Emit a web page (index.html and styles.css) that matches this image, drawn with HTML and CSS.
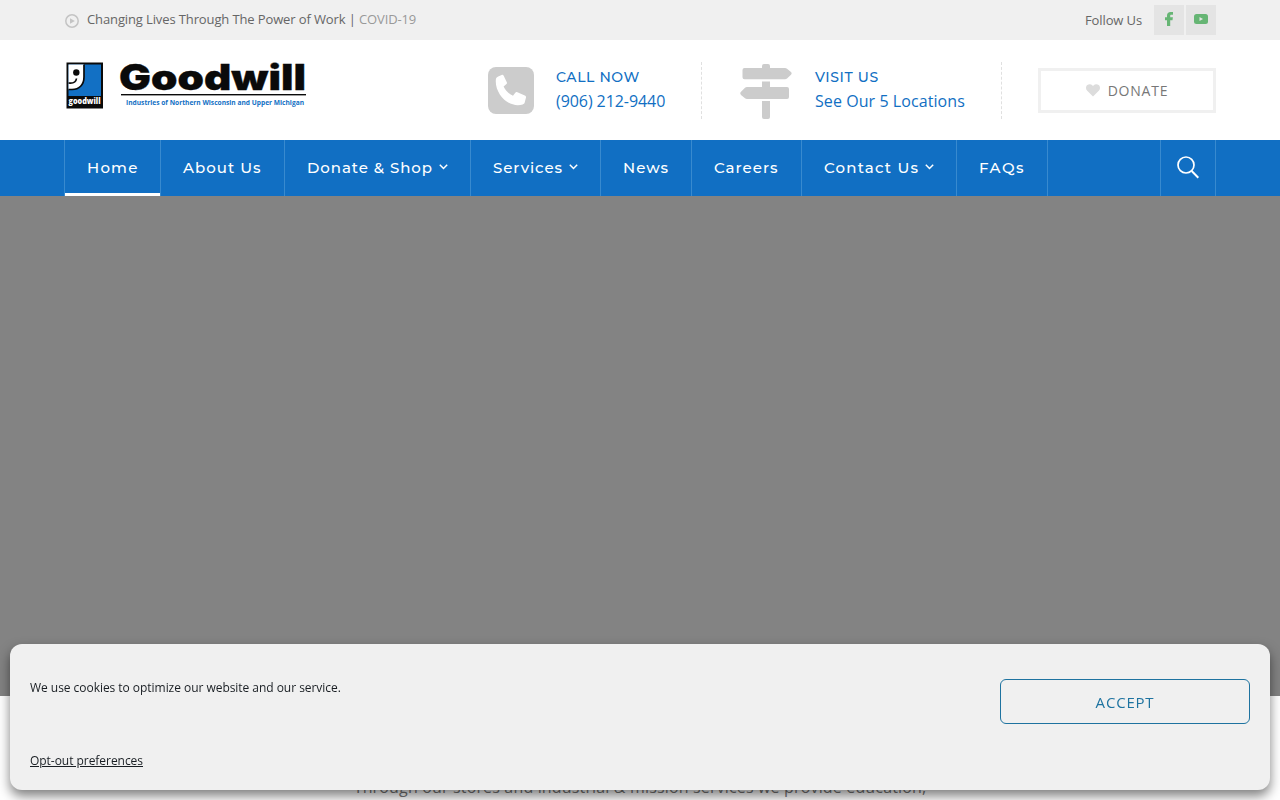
FILE: index.html
```html
<!DOCTYPE html>
<html lang="en-US">
<head>
  <meta charset="UTF-8">
  <meta name="viewport" content="width=device-width, initial-scale=1.0">
  <title>Goodwill Industries of Northern Wisconsin and Upper Michigan</title>
  <link rel="stylesheet" href="styles.css">
</head>
<body>
  <div class="top-bar">
    <div class="container top-inner">
      <div class="tagline">
        <svg width="14" height="14" viewBox="0 0 14 14"><circle cx="7" cy="7" r="6.2" fill="none" stroke="#c4c4c4" stroke-width="1.5"/><path d="M5 4.3v5.4L9.8 7z" fill="#c4c4c4"/></svg>
        <span>Changing Lives Through The Power of Work | <a href="#">COVID-19</a></span>
      </div>
      <div class="social">
        <span>Follow Us</span>
        <a href="#" aria-label="Facebook"><svg width="10" height="14" viewBox="0 0 10 14"><path d="M3 14V8.300H1V5.200h2V3.600C3 1.300 4.400 0 6.500 0H9v2.800H7.300c-.9 0-1.100.400-1.100 1.100v1.300h2.700l-.4 3.100H6.200V14z" fill="#66b574"/></svg></a>
        <a href="#" aria-label="YouTube"><svg width="14" height="10" viewBox="0 0 14 10"><rect width="14" height="10" rx="2.500" fill="#66b574"/><path d="M5.500 3v4L9 5z" fill="#e4e4e4"/></svg></a>
      </div>
    </div>
  </div>

  <header class="container header">
    <a href="#" class="logo" aria-label="Goodwill">
      <svg width="250" height="50" viewBox="0 0 250 50">
        <rect x="2.500" y="2.500" width="36.500" height="46" fill="#0a0a0a"/>
        <rect x="4.500" y="4.500" width="32.500" height="31.500" fill="#1270c4"/>
        <path d="M4.500 4.500H20V17c0 8-5 12.500-12 12.500H4.500z" fill="#fff"/>
        <path d="M20 4.500V17c0 8-5 12.500-12 12.500H4.500" fill="none" stroke="#0a0a0a" stroke-width="1.700"/>
        <circle cx="12.300" cy="12.500" r="3.200" fill="#0a0a0a"/>
        <path d="M4.500 23c4.500.500 7.500-1 8-4.500" fill="none" stroke="#0a0a0a" stroke-width="1.700"/>
        <text x="4.500" y="44" class="logo-small" textLength="32" lengthAdjust="spacingAndGlyphs">goodwill</text>
        <text x="55" y="30" class="logo-name" textLength="187" lengthAdjust="spacingAndGlyphs">Goodwill</text>
        <rect x="57" y="34" width="185" height="1.400" fill="#0a0a0a"/>
        <text x="62" y="44.500" class="logo-sub" textLength="178" lengthAdjust="spacingAndGlyphs">Industries of Northern Wisconsin and Upper Michigan</text>
      </svg>
    </a>
    <div class="header-info">
      <a href="#" class="info call">
        <svg width="46" height="47" viewBox="0 0 46 47"><rect width="46" height="47" rx="8" fill="#ccc"/><path d="M10.200 9.500 13.600 8c1-.400 1.700 0 2.200.900l3 6.300c.4.900.1 1.500-.6 2.100l-2.600 2.200c2 4.300 5 7.300 9.400 9.300l2.300-3c.6-.7 1.200-.9 2.100-.5l7.400 3.200c.9.400 1.400 1 1.200 1.900l-1.300 5.200c-.2.900-1 1.600-2 1.900C20.500 41.700 6.200 26.200 7.900 12.200c.2-1.300 1.200-2.200 2.300-2.700z" fill="#fff"/></svg>
        <span class="info-text"><b>CALL NOW</b><span class="phone">(906) 212-9440</span></span>
      </a>
      <a href="#" class="info visit">
        <svg width="52" height="55" viewBox="0 0 52 55"><path d="M22 4V2q0-2 2-2h4q2 0 2 2v2h15q1.200 0 2 .800L51 8q1.300 1.300 0 2.700l-4 3.800q-.8.700-2 .7H4.500q-2 0-2-2V6q0-2 2-2zM22 17.500h8V23h17q2 0 2 2v8q0 2-2 2H7q-1.200 0-2-.7L1 31q-1.500-1.700 0-3.300L5 23.800q.8-.8 2-.8h15zM22 37h8v16q0 2-2 2h-4q-2 0-2-2z" fill="#ccc"/></svg>
        <span class="info-text"><b>VISIT US</b><span class="locations">See Our 5 Locations</span></span>
      </a>
      <a href="#" class="donate">
        <svg width="14" height="13" viewBox="0 0 14 13"><path d="M7 12.500 1.200 6.800C-.5 5-.3 2.400 1.300 1 3-.3 5.200 0 6.500 1.400l.5.500.5-.5C8.800 0 11 -.3 12.700 1c1.600 1.400 1.800 4 .1 5.800z" fill="#dcdcdc"/></svg>
        <span>DONATE</span>
      </a>
    </div>
  </header>

  <nav class="main-nav">
    <div class="container nav-inner">
      <ul class="menu">
        <li class="active"><a href="#">Home</a></li>
        <li><a href="#">About Us</a></li>
        <li class="tight"><a href="#">Donate &amp; Shop</a><svg width="9" height="6" viewBox="0 0 9 6"><path d="M.8.800 4.500 4.500 8.200.8" class="arrow"/></svg></li>
        <li class="tight"><a href="#">Services</a><svg width="9" height="6" viewBox="0 0 9 6"><path d="M.8.800 4.500 4.500 8.200.8" class="arrow"/></svg></li>
        <li><a href="#">News</a></li>
        <li><a href="#">Careers</a></li>
        <li class="wide"><a href="#">Contact Us</a><svg width="9" height="6" viewBox="0 0 9 6"><path d="M.8.800 4.500 4.500 8.200.8" class="arrow"/></svg></li>
        <li class="wide"><a href="#">FAQs</a></li>
      </ul>
      <a href="#" class="search" aria-label="Search">
        <svg width="22" height="23" viewBox="0 0 22 23"><circle cx="9" cy="9" r="8" fill="none" stroke="#fff" stroke-width="1.700"/><path d="M14.700 15 21.300 21.700" stroke="#fff" stroke-width="2"/></svg>
      </a>
    </div>
  </nav>

  <section class="hero"></section>

  <main class="intro">
    <p>Through our stores and industrial &amp; mission services we provide education,</p>
  </main>

  <div class="cookie-banner">
    <div class="cookie-row">
      <p>We use cookies to optimize our website and our service.</p>
      <button>ACCEPT</button>
    </div>
    <a href="#" class="opt-out">Opt-out preferences</a>
  </div>
</body>
</html>
```
FILE: styles.css
```css
:root {
  --blue: #116fc3;
  --light: #f0f0f0;
}

* {
  box-sizing: border-box;
}

body {
  margin: 0;
  height: 800px;
  overflow: hidden;
  font-family: "Open Sans", sans-serif;
  background: #fff;
  color: #666;
}

a {
  color: inherit;
  text-decoration: none;
}

svg {
  display: block;
  flex-shrink: 0;
}

.container {
  width: 1152px;
  margin: 0 auto;
}

/* top bar */
.top-bar {
  height: 40px;
  background: var(--light);
  font-size: 13px;
  letter-spacing: -.12px;
}

.top-inner {
  display: flex;
  justify-content: space-between;
  height: 40px;
  align-items: center;
}

.tagline {
  display: flex;
  align-items: center;
  gap: 8px;
  padding-left: 1px;
  line-height: 18px;
}

.tagline span {
  margin-top: -2px;
}

.tagline svg {
  margin-top: 2px;
}

.tagline a {
  color: #999;
}

.social {
  display: flex;
  align-items: center;
  gap: 2px;
}

.social span {
  margin-right: 10px;
}

.social a {
  display: flex;
  justify-content: center;
  width: 30px;
  height: 30px;
  padding-bottom: 3px;
  align-items: center;
  background: #e4e4e4;
}

/* header */
.header {
  display: flex;
  justify-content: space-between;
  align-items: center;
  height: 100px;
}

.logo {
  margin-top: -11px;
}

.logo svg {
  overflow: visible;
}

.logo-name {
  font: 900 35px Inter, sans-serif;
  fill: #0a0a0a;
  stroke: #0a0a0a;
  stroke-width: .3px;
}

.logo-sub {
  font: 700 7px "Open Sans", sans-serif;
  fill: #1270c4;
}

.logo-small {
  font: 800 8px "Open Sans", sans-serif;
  fill: #fff;
}

.header-info {
  display: flex;
  align-items: center;
}

.info {
  display: flex;
  align-items: center;
  height: 57px;
  padding-right: 36px;
  margin-right: 36px;
  border-right: 1px dashed #e0e0e0;
  color: var(--blue);
}

.call {
  gap: 22px;
  width: 214px;
  margin-right: 38px;
}

.visit {
  gap: 23px;
  width: 262px;
}

.visit svg {
  margin-top: 2px;
}

.info-text {
  display: flex;
  flex-direction: column;
  margin-top: -2px;
  font-size: 16px;
  line-height: 24px;
  white-space: nowrap;
}

.info-text b {
  font-family: Montserrat, Inter, sans-serif;
  font-size: 14px;
  font-weight: 500;
  letter-spacing: .6px;
}

.phone {
  letter-spacing: -.07px;
}

.locations {
  letter-spacing: .07px;
}

.donate {
  display: flex;
  align-items: center;
  justify-content: center;
  gap: 8px;
  width: 178px;
  height: 45px;
  border: 3px solid var(--light);
  color: #777;
  font-size: 14px;
  letter-spacing: .8px;
}

/* navigation */
.main-nav {
  height: 56px;
  background: var(--blue);
}

.nav-inner {
  display: flex;
  justify-content: space-between;
  height: 56px;
}

.menu {
  display: grid;
  grid-template-columns: 97px 124px 186px 130px 91px 110px 155px 91px;
  margin: 0;
  padding: 0;
  list-style: none;
}

.menu li {
  display: flex;
  align-items: center;
  gap: 6px;
  padding: 0 0 2px 22px;
  border-right: 1px solid #388acf;
  font-family: Montserrat, Inter, sans-serif;
  font-size: 15px;
  font-weight: 500;
  letter-spacing: 1px;
  color: #fff;
  white-space: nowrap;
}

.menu li:first-child {
  border-left: 1px solid #388acf;
}

.menu .tight {
  letter-spacing: .93px;
}

.menu .wide {
  letter-spacing: 1.2px;
}

.menu .wide:last-child {
  letter-spacing: 1.5px;
}

.menu .active {
  letter-spacing: 1.2px;
  background: linear-gradient(#fff, #fff) bottom / 100% 3px no-repeat;
  background-clip: padding-box;
}

.arrow {
  fill: none;
  stroke: #fff;
  stroke-width: 1.5;
}

.search {
  display: flex;
  align-items: center;
  justify-content: center;
  width: 56px;
  padding-bottom: 2px;
  border: solid #388acf;
  border-width: 0 1px;
}

.hero {
  height: 500px;
  background: #838383;
}

.intro {
  padding-top: 78px;
  text-align: center;
}

.intro p {
  margin: 0;
  font-size: 16px;
  line-height: 26px;
  letter-spacing: .16px;
  color: #777;
}

/* cookie notice */
.cookie-banner {
  position: fixed;
  left: 10px;
  right: 10px;
  bottom: 10px;
  height: 146px;
  padding: 35px 20px 20px;
  display: flex;
  flex-direction: column;
  justify-content: space-between;
  border-radius: 12px;
  background: var(--light);
  box-shadow: 0 6px 12px rgba(0, 0, 0, .5);
  color: #191e23;
  font-size: 12px;
  letter-spacing: -.04px;
}

.cookie-row {
  display: flex;
  justify-content: space-between;
}

.cookie-row p {
  margin: 0;
  line-height: 18px;
}

.cookie-row button {
  width: 250px;
  height: 45px;
  border: 1px solid #1e73a0;
  border-radius: 6px;
  background: transparent;
  color: #1e73a0;
  font: 15px "Open Sans", sans-serif;
  letter-spacing: .8px;
}

.opt-out {
  align-self: flex-start;
  line-height: 18px;
  text-decoration: underline;
}
```
